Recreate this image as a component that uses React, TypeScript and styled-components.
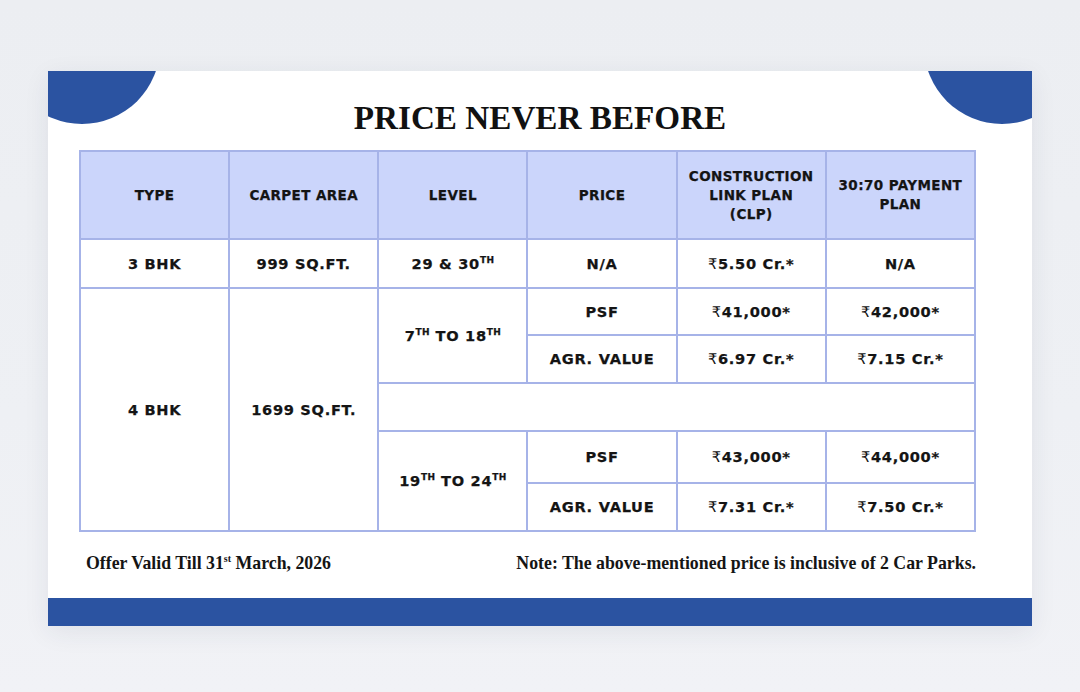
import React from "react";
import styled, { createGlobalStyle } from "styled-components";

const Global = createGlobalStyle`
  html, body { margin: 0; padding: 0; }
  body {
    background: linear-gradient(180deg, #eceef2 0%, #eef0f4 60%, #f1f2f6 100%);
    width: 1080px;
    height: 692px;
    overflow: hidden;
  }
`;

const Page = styled.div`
  width: 1080px;
  height: 692px;
  padding: 71px 48px 0 48px;
  box-sizing: border-box;
`;

const Card = styled.div`
  position: relative;
  overflow: hidden;
  width: 984px;
  background: #ffffff;
  box-shadow: 0 6px 24px rgba(40, 50, 80, 0.08);
  display: flex;
  flex-direction: column;
  align-items: flex-start;
  padding-top: 27px;
`;

const Corner = styled.div<{ $side: "left" | "right" }>`
  position: absolute;
  top: -103px;
  ${(p) => (p.$side === "left" ? "left: -44px;" : "right: -48px;")}
  width: 156px;
  height: 156px;
  border-radius: 50%;
  background: #2b53a1;
`;

const Title = styled.h1`
  align-self: center;
  margin: 0;
  font-family: "Liberation Serif", "DejaVu Serif", serif;
  font-weight: 700;
  font-size: 33.2px;
  line-height: 40px;
  color: #111111;
`;

const Table = styled.table`
  margin: 12px 0 0 31px;
  width: 897px;
  border-collapse: collapse;
  table-layout: fixed;
  border: 2px solid #a6b3e8;
  font-family: "DejaVu Sans", "Liberation Sans", sans-serif;
  font-weight: 700;
  color: #141414;
`;

const HeadCell = styled.th`
  background: #cbd5fb;
  border: 2px solid #a6b3e8;
  height: 86px;
  padding: 0 8px;
  font-size: 13.5px;
  line-height: 19px;
  letter-spacing: 0.4px;
  text-align: center;
  vertical-align: middle;
  font-weight: 700;
  -webkit-text-stroke: 0.25px #141414;
`;

const Cell = styled.td<{ $h?: number }>`
  border: 2px solid #a6b3e8;
  height: ${(p) => (p.$h ? `${p.$h}px` : "auto")};
  padding: 0 6px;
  font-size: 14.6px;
  line-height: 18px;
  letter-spacing: 0.7px;
  text-align: center;
  vertical-align: middle;
  background: #ffffff;
  -webkit-text-stroke: 0.25px #141414;
`;

const Sup = styled.sup`
  font-size: 9px;
  line-height: 0;
  vertical-align: 0;
  position: relative;
  top: -6px;
  letter-spacing: 0.3px;
`;

const Rupee = styled.span`
  font-weight: 400;
  -webkit-text-stroke: 0;
`;

const Footer = styled.div`
  margin: 20px 0 0 38px;
  width: 890px;
  display: flex;
  justify-content: space-between;
  align-items: center;
  font-family: "Liberation Serif", "DejaVu Serif", serif;
  font-weight: 700;
  font-size: 17.8px;
  line-height: 22px;
  color: #151515;
`;

const FootSup = styled.sup`
  font-size: 10px;
  line-height: 0;
  vertical-align: 0;
  position: relative;
  top: -7px;
`;

const Bar = styled.div`
  align-self: stretch;
  margin-top: 24px;
  height: 28px;
  background: #2b53a1;
`;

const Price = ({ v }: { v: string }) => (
  <>
    <Rupee>₹</Rupee>
    {v}
  </>
);

export default function App() {
  return (
    <>
      <Global />
      <Page>
        <Card>
          <Corner $side="left" />
          <Corner $side="right" />
          <Title>PRICE NEVER BEFORE</Title>
          <Table>
            <thead>
              <tr>
                <HeadCell>TYPE</HeadCell>
                <HeadCell>CARPET AREA</HeadCell>
                <HeadCell>LEVEL</HeadCell>
                <HeadCell>PRICE</HeadCell>
                <HeadCell>
                  CONSTRUCTION
                  <br />
                  LINK PLAN
                  <br />
                  (CLP)
                </HeadCell>
                <HeadCell>
                  30:70 PAYMENT
                  <br />
                  PLAN
                </HeadCell>
              </tr>
            </thead>
            <tbody>
              <tr>
                <Cell $h={47}>3 BHK</Cell>
                <Cell>999 SQ.FT.</Cell>
                <Cell>
                  29 &amp; 30<Sup>TH</Sup>
                </Cell>
                <Cell>N/A</Cell>
                <Cell>
                  <Price v="5.50 Cr.*" />
                </Cell>
                <Cell>N/A</Cell>
              </tr>
              <tr>
                <Cell rowSpan={5}>4 BHK</Cell>
                <Cell rowSpan={5}>1699 SQ.FT.</Cell>
                <Cell rowSpan={2}>
                  7<Sup>TH</Sup> TO 18<Sup>TH</Sup>
                </Cell>
                <Cell $h={45}>PSF</Cell>
                <Cell>
                  <Price v="41,000*" />
                </Cell>
                <Cell>
                  <Price v="42,000*" />
                </Cell>
              </tr>
              <tr>
                <Cell $h={46}>AGR. VALUE</Cell>
                <Cell>
                  <Price v="6.97 Cr.*" />
                </Cell>
                <Cell>
                  <Price v="7.15 Cr.*" />
                </Cell>
              </tr>
              <tr>
                <Cell $h={46} colSpan={4} />
              </tr>
              <tr>
                <Cell rowSpan={2}>
                  19<Sup>TH</Sup> TO 24<Sup>TH</Sup>
                </Cell>
                <Cell $h={50}>PSF</Cell>
                <Cell>
                  <Price v="43,000*" />
                </Cell>
                <Cell>
                  <Price v="44,000*" />
                </Cell>
              </tr>
              <tr>
                <Cell $h={46}>AGR. VALUE</Cell>
                <Cell>
                  <Price v="7.31 Cr.*" />
                </Cell>
                <Cell>
                  <Price v="7.50 Cr.*" />
                </Cell>
              </tr>
            </tbody>
          </Table>
          <Footer>
            <span>
              Offer Valid Till 31<FootSup>st</FootSup> March, 2026
            </span>
            <span>Note: The above-mentioned price is inclusive of 2 Car Parks.</span>
          </Footer>
          <Bar />
        </Card>
      </Page>
    </>
  );
}
